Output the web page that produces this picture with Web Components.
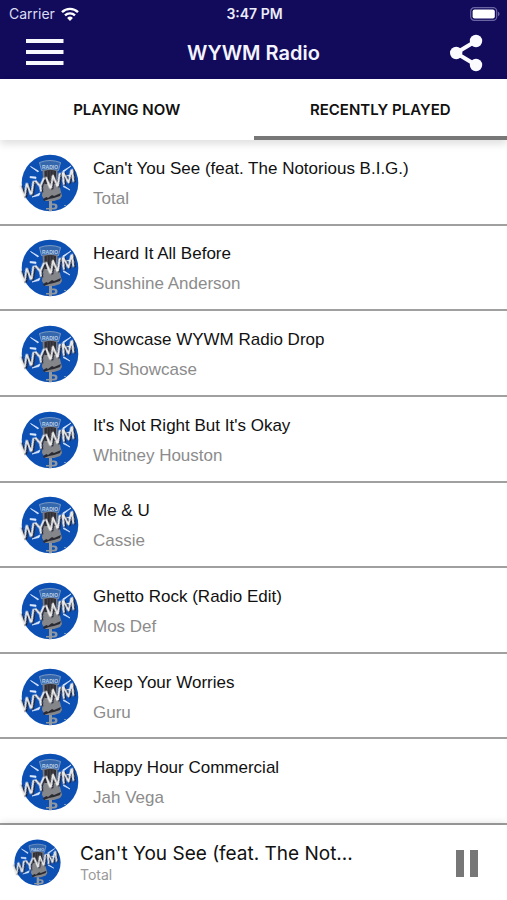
<!DOCTYPE html>
<html lang="en">
<head>
<meta charset="utf-8">
<meta name="viewport" content="width=device-width, initial-scale=1">
<title>WYWM Radio</title>
<style>
  body { margin: 0; background: #fff; }
</style>
</head>
<body>
<radio-app></radio-app>

<template id="t-app">
  <style>
    :host { display: flex; flex-direction: column; min-height: 100vh; background: #fff; color: #111;
      font-family: "Liberation Sans", Arial, sans-serif; }
    track-list { flex: 1; }
  </style>
  <status-bar></status-bar>
  <app-header>WYWM Radio</app-header>
  <tab-bar>
    <tab-item>PLAYING NOW</tab-item>
    <tab-item selected>RECENTLY PLAYED</tab-item>
  </tab-bar>
  <track-list>
    <track-row><span slot="title">Can't You See (feat. The Notorious B.I.G.)</span><span slot="artist">Total</span></track-row>
    <track-row><span slot="title">Heard It All Before</span><span slot="artist">Sunshine Anderson</span></track-row>
    <track-row><span slot="title">Showcase WYWM Radio Drop</span><span slot="artist">DJ Showcase</span></track-row>
    <track-row><span slot="title">It's Not Right But It's Okay</span><span slot="artist">Whitney Houston</span></track-row>
    <track-row><span slot="title">Me &amp; U</span><span slot="artist">Cassie</span></track-row>
    <track-row><span slot="title">Ghetto Rock (Radio Edit)</span><span slot="artist">Mos Def</span></track-row>
    <track-row><span slot="title">Keep Your Worries</span><span slot="artist">Guru</span></track-row>
    <track-row><span slot="title">Happy Hour Commercial</span><span slot="artist">Jah Vega</span></track-row>
  </track-list>
  <mini-player><span slot="title">Can't You See (feat. The Not...</span><span slot="artist">Total</span></mini-player>
</template>

<template id="t-status">
  <style>
    :host { display: grid; grid-template-columns: 1fr auto 1fr; align-items: center; height: 27px; padding: 0 7px 0 9px;
      background: #120b5c; color: #fff; font: 500 14px/27px Inter, sans-serif; }
    .left { display: flex; align-items: center; gap: 6px; color: #dcdcf2; font-weight: 400; }
    .time { font-weight: 600; color: #ececfa; }
    .battery { justify-self: end; }
    svg { display: block; }
  </style>
  <div class="left">Carrier
    <svg width="18" height="14" viewBox="0 0 18 14" fill="none" stroke="#fff" stroke-width="2.4" aria-label="Wi-Fi">
      <path d="M1 5.2a11.4 11.4 0 0 1 16 0"/><path d="M4 8.4a7.2 7.2 0 0 1 10 0"/>
      <path d="M9 14 6.1 10.9a4.1 4.1 0 0 1 5.8 0z" fill="#fff" stroke="none"/>
    </svg>
  </div>
  <div class="time">3:47 PM</div>
  <svg class="battery" width="30" height="14" viewBox="0 0 30 14" aria-label="Battery full">
    <rect x=".7" y=".7" width="26" height="12.6" rx="3.6" fill="none" stroke="#6a65a2" stroke-width="1.2"/>
    <rect x="2.6" y="2.6" width="22.2" height="8.8" rx="2" fill="#fff"/>
    <path d="M28 4.8c2 .7 2 3.7 0 4.4z" fill="#6a65a2"/>
  </svg>
</template>

<template id="t-header">
  <style>
    :host { display: grid; grid-template-columns: 1fr auto 1fr; align-items: center; height: 52px; padding: 0 23px;
      background: #120b5c; color: #f4f4ff; }
    h1 { margin: 0; font: 600 20px/52px Inter, sans-serif; }
    button { border: 0; padding: 0; background: none; display: block; cursor: pointer; }
    button:last-child { justify-self: end; }
    svg { display: block; }
  </style>
  <button aria-label="Menu"><svg width="44" height="40" viewBox="0 0 44 40" fill="#f8f8ff"><path d="M3 6h37.500v4H3zM3 17h37.500v4H3zM3 28h37.500v4H3z"/></svg></button>
  <h1><slot></slot></h1>
  <button aria-label="Share"><svg width="34" height="38" viewBox="0 0 34 38" fill="#fbfbff"><path d="M26 7 6 19l20 12" fill="none" stroke="#fbfbff" stroke-width="4"/><circle cx="26" cy="7" r="6.2"/><circle cx="6.200" cy="19" r="6.2"/><circle cx="26" cy="31" r="6.2"/></svg></button>
</template>

<template id="t-tabs">
  <style>
    :host { display: flex; height: 61px; background: #fff; position: relative; box-shadow: 0 4px 8px rgba(0,0,0,.13); }
    ::slotted(*) { flex: 1 1 0; }
  </style>
  <slot></slot>
</template>

<template id="t-tab">
  <style>
    :host { display: flex; }
    button { flex: 1; border: 0; padding: 4px 0 0; background: none; color: #111; cursor: pointer;
      font: 600 15px/20px Inter, sans-serif; border-bottom: 4px solid transparent; }
    :host([selected]) button { border-color: #777; }
  </style>
  <button role="tab"><slot></slot></button>
</template>

<template id="t-list">
  <style>
    :host { display: flex; flex-direction: column; }
    ::slotted(*) { flex: 1; }
  </style>
  <slot></slot>
</template>

<template id="t-row">
  <style>
    :host { display: flex; align-items: center; gap: 13px; padding: 2px 20px 0; border-bottom: 2px solid #a0a0a0; }
    station-logo { width: 60px; height: 60px; }
    .text { min-width: 0; display: grid; gap: 8px; padding-top: 2px; }
    .title { font-size: 17px; line-height: 22px; color: #111; }
    .artist { font-size: 17px; line-height: 22px; color: #8c8c8c; }
  </style>
  <station-logo></station-logo>
  <div class="text"><div class="title"><slot name="title"></slot></div><div class="artist"><slot name="artist"></slot></div></div>
</template>

<template id="t-player">
  <style>
    :host { display: flex; align-items: center; height: 75px; padding: 0 25px 0 13px; gap: 18px; background: #fff;
      position: relative; box-shadow: 0 -2px 8px rgba(0,0,0,.12); font-family: Inter, sans-serif; }
    station-logo { width: 49px; height: 49px; }
    .text { flex: 1; min-width: 0; }
    .title { font-size: 19px; line-height: 24px; color: #111; }
    .artist { font-size: 14px; line-height: 18px; color: #999; }
    button { border: 0; padding: 0; background: none; cursor: pointer; }
    svg { display: block; }
  </style>
  <station-logo></station-logo>
  <div class="text"><div class="title"><slot name="title"></slot></div><div class="artist"><slot name="artist"></slot></div></div>
  <button aria-label="Pause"><svg width="30" height="28" viewBox="0 0 30 28" fill="#777"><path d="M4 1h8v27H4zM18 1h8v27h-8z"/></svg></button>
</template>

<template id="t-logo">
  <style>
    :host { display: block; flex: none; }
    svg { display: block; width: 100%; height: 100%; overflow: visible; }
    text { font-family: "Liberation Sans", Arial, sans-serif; font-weight: 700; }
    .name { font-style: italic; font-size: 17px; font-weight: 400; filter: drop-shadow(1px 1px 0 #17192b); }
  </style>
  <svg viewBox="0 0 60 60" role="img" aria-label="WYWM Radio">
    <circle cx="30" cy="30" r="28.3" fill="#0d50b4"/>
    <path d="M10.500 13.500l8 4.500-.6 1zM10 23.500l6 .5v1.500l-6-.8zM12 44l8-4-1 2.500zM51 13l-7.500 6-.8-1zM50 37l-7-3.500 1-.8zM45 23l5-1v1z" fill="#dceaff" stroke="#dceaff" stroke-width=".7"/>
    <path d="M19.500 9.500q10.500-4 21 0l-2 8q-8.500-2.500-17 0z" fill="#3567ad" stroke="#8fa9c8" stroke-width=".8"/>
    <text x="30" y="15.600" font-size="5" text-anchor="middle" fill="#b9cfe6">RADIO</text>
    <path d="M22.500 17.500q7.500-2 15 0v15h-14z" fill="#7b7b80"/>
    <path d="M24.500 18q6-2 11.500 0v13h-11.500z" fill="#302f35"/>
    <path d="M27.300 18v13M30.200 17.500V31M33.100 18v13" stroke="#55555b" stroke-width=".7"/>
    <path d="M23 31h16l3 12-2 3-6 2h-9l-3-5z" fill="#85868a"/>
    <path d="M23 46l3.500-2 1.500 1 4-3 2 1 7-3-1 3-6 2-5 1-5 2z" fill="#292a32"/>
    <path d="M29 48h3v2.500h2q3.500 0 3.500 3T34 56.500h-2V58h-3v-1.500h-3v-1.500h3z" fill="#9298a0"/>
    <path d="M32 52.300h1.500q1.500 0 1.500 1.200t-1.500 1.200H32z" fill="#0d50b4"/>
    <path d="M44 52h2v.7h-2z" fill="#9db5cd"/>
    <text class="name" transform="rotate(-17 3 44)" x="1" y="44" fill="#f4f4f2" stroke="#f4f4f2" stroke-width=".5">WYWM</text>
  </svg>
</template>

<script>
  const define = (name, id) => customElements.define(name, class extends HTMLElement {
    constructor() {
      super();
      this.attachShadow({ mode: 'open' }).append(document.getElementById(id).content.cloneNode(true));
    }
  });
  define('station-logo', 't-logo');
  define('status-bar', 't-status');
  define('app-header', 't-header');
  define('tab-item', 't-tab');
  define('tab-bar', 't-tabs');
  define('track-row', 't-row');
  define('track-list', 't-list');
  define('mini-player', 't-player');
  define('radio-app', 't-app');
</script>
</body>
</html>
